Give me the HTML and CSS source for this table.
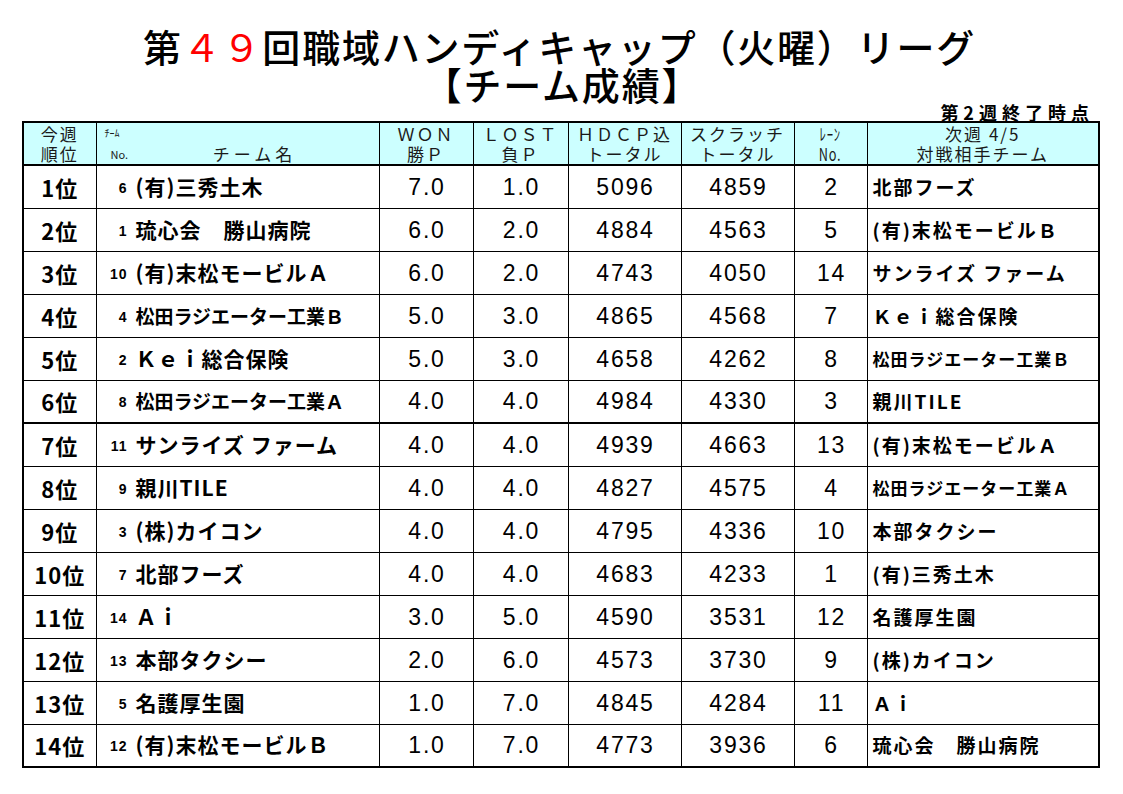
FILE: index.html
```html
<!DOCTYPE html>
<html lang="ja">
<head>
<meta charset="utf-8">
<title>第49回職域ハンディキャップ（火曜）リーグ</title>
<link rel="stylesheet" href="styles.css">
</head>
<body>
<div class="page">
  <header class="titles">
    <h1 class="title">第<span class="red">４９</span>回職域ハンディキャップ（火曜）リーグ</h1>
    <h2 class="subtitle">【チーム成績】</h2>
  </header>
  <div class="asof">第2週終了時点</div>
  <table class="standings">
    <colgroup>
      <col class="c-rank"><col class="c-team"><col class="c-won"><col class="c-lost">
      <col class="c-hdcp"><col class="c-scr"><col class="c-lane"><col class="c-next">
    </colgroup>
    <thead>
      <tr>
        <th class="h2l">今週<br>順位</th>
        <th class="h-team"><span class="tiny">ﾁｰﾑ</span><span class="tiny no">No.</span><span class="teamlabel">チーム名</span></th>
        <th class="h2l">ＷＯＮ<br>勝Ｐ</th>
        <th class="h2l">ＬＯＳＴ<br>負Ｐ</th>
        <th class="h2l">ＨＤＣＰ込<br>トータル</th>
        <th class="h2l">スクラッチ<br>トータル</th>
        <th class="h2l lane"><span class="cond">ﾚｰﾝ</span><br><span class="cond">No.</span></th>
        <th class="h2l">次週 4/5<br>対戦相手チーム</th>
      </tr>
    </thead>
    <tbody>
      <tr><td class="rank">1位</td><td class="team"><span class="num">6</span><span class="name">(有)三秀土木</span></td><td class="n">7.0</td><td class="n">1.0</td><td class="n">5096</td><td class="n">4859</td><td class="n">2</td><td class="next">北部フーズ</td></tr>
      <tr><td class="rank">2位</td><td class="team"><span class="num">1</span><span class="name">琉心会　勝山病院</span></td><td class="n">6.0</td><td class="n">2.0</td><td class="n">4884</td><td class="n">4563</td><td class="n">5</td><td class="next">(有)末松モービルＢ</td></tr>
      <tr><td class="rank">3位</td><td class="team"><span class="num">10</span><span class="name">(有)末松モービルＡ</span></td><td class="n">6.0</td><td class="n">2.0</td><td class="n">4743</td><td class="n">4050</td><td class="n">14</td><td class="next">サンライズ ファーム</td></tr>
      <tr><td class="rank">4位</td><td class="team"><span class="num">4</span><span class="name sm">松田ラジエーター工業Ｂ</span></td><td class="n">5.0</td><td class="n">3.0</td><td class="n">4865</td><td class="n">4568</td><td class="n">7</td><td class="next">Ｋｅｉ総合保険</td></tr>
      <tr><td class="rank">5位</td><td class="team"><span class="num">2</span><span class="name">Ｋｅｉ総合保険</span></td><td class="n">5.0</td><td class="n">3.0</td><td class="n">4658</td><td class="n">4262</td><td class="n">8</td><td class="next sm">松田ラジエーター工業Ｂ</td></tr>
      <tr class="thick"><td class="rank">6位</td><td class="team"><span class="num">8</span><span class="name sm">松田ラジエーター工業Ａ</span></td><td class="n">4.0</td><td class="n">4.0</td><td class="n">4984</td><td class="n">4330</td><td class="n">3</td><td class="next">親川TILE</td></tr>
      <tr><td class="rank">7位</td><td class="team"><span class="num">11</span><span class="name">サンライズ ファーム</span></td><td class="n">4.0</td><td class="n">4.0</td><td class="n">4939</td><td class="n">4663</td><td class="n">13</td><td class="next">(有)末松モービルＡ</td></tr>
      <tr><td class="rank">8位</td><td class="team"><span class="num">9</span><span class="name">親川TILE</span></td><td class="n">4.0</td><td class="n">4.0</td><td class="n">4827</td><td class="n">4575</td><td class="n">4</td><td class="next sm">松田ラジエーター工業Ａ</td></tr>
      <tr><td class="rank">9位</td><td class="team"><span class="num">3</span><span class="name">(株)カイコン</span></td><td class="n">4.0</td><td class="n">4.0</td><td class="n">4795</td><td class="n">4336</td><td class="n">10</td><td class="next">本部タクシー</td></tr>
      <tr><td class="rank">10位</td><td class="team"><span class="num">7</span><span class="name">北部フーズ</span></td><td class="n">4.0</td><td class="n">4.0</td><td class="n">4683</td><td class="n">4233</td><td class="n">1</td><td class="next">(有)三秀土木</td></tr>
      <tr><td class="rank">11位</td><td class="team"><span class="num">14</span><span class="name">Ａｉ</span></td><td class="n">3.0</td><td class="n">5.0</td><td class="n">4590</td><td class="n">3531</td><td class="n">12</td><td class="next">名護厚生園</td></tr>
      <tr><td class="rank">12位</td><td class="team"><span class="num">13</span><span class="name">本部タクシー</span></td><td class="n">2.0</td><td class="n">6.0</td><td class="n">4573</td><td class="n">3730</td><td class="n">9</td><td class="next">(株)カイコン</td></tr>
      <tr><td class="rank">13位</td><td class="team"><span class="num">5</span><span class="name">名護厚生園</span></td><td class="n">1.0</td><td class="n">7.0</td><td class="n">4845</td><td class="n">4284</td><td class="n">11</td><td class="next">Ａｉ</td></tr>
      <tr><td class="rank">14位</td><td class="team"><span class="num">12</span><span class="name">(有)末松モービルＢ</span></td><td class="n">1.0</td><td class="n">7.0</td><td class="n">4773</td><td class="n">3936</td><td class="n">6</td><td class="next">琉心会　勝山病院</td></tr>
    </tbody>
  </table>
</div>
</body>
</html>
```
FILE: styles.css
```css
* { box-sizing: border-box; }
html, body { margin: 0; padding: 0; background: #fff; }
body {
  font-family: "Noto Sans CJK JP", "Liberation Sans", sans-serif;
  color: #000;
}
.page {
  width: 1123px;
  padding: 27px 0 0 22px;
}
.titles {
  width: 1075px;
  text-align: center;
}
.title, .subtitle {
  margin: 0;
  font-size: 38px;
  line-height: 38px;
  font-weight: 500;
  letter-spacing: 1.8px;
}
.title { padding-left: 0; }
.subtitle { padding-left: 6px; }
.red { color: #ff0000; font-weight: 400; }
.asof {
  width: 1072px;
  text-align: right;
  font-size: 18px;
  line-height: 18px;
  font-weight: 700;
  letter-spacing: 5px;
  margin-top: 0;
}
.standings {
  border-collapse: collapse;
  table-layout: fixed;
  width: 1076px;
  border: 2px solid #000;
}
.c-rank { width: 73px; }
.c-team { width: 283px; }
.c-won { width: 94px; }
.c-lost { width: 95px; }
.c-hdcp { width: 113px; }
.c-scr { width: 113px; }
.c-lane { width: 73px; }
.c-next { width: 232px; }

.standings th, .standings td {
  border: 1px solid #000;
  padding: 0;
}
.standings thead tr { height: 43px; }
.standings thead th {
  background: #ccffff;
  font-weight: 400;
  font-size: 17px;
  line-height: 20px;
  color: #1a1a1a;
  letter-spacing: 2px;
  text-align: center;
  vertical-align: middle;
  border-bottom: 2px solid #000;
}
.h-team {
  position: relative;
}
.tiny {
  position: absolute;
  font-size: 10px;
  line-height: 10px;
  letter-spacing: 0;
  left: 8px;
  top: 5px;
}
.tiny.no { left: 14px; top: 26px; font-size: 11px; }
.teamlabel {
  display: block;
  padding: 20px 0 0 34px;
  letter-spacing: 4px;
}
.cond { display: inline-block; transform: scaleX(0.75); letter-spacing: 1px; }

.standings tbody tr { height: 43px; }
.standings tbody tr.thick td { border-bottom: 2px solid #000; }
.standings td {
  font-size: 21px;
  line-height: 24px;
  vertical-align: middle;
}
.rank {
  text-align: center;
  font-weight: 700;
  font-size: 22px !important;
  letter-spacing: 1px;
}
.team {
  white-space: nowrap;
}
.num {
  display: inline-block;
  width: 31px;
  text-align: right;
  font-family: "Liberation Sans", sans-serif;
  font-size: 14px;
  font-weight: 700;
  letter-spacing: 1px;
  vertical-align: 2px;
}
.name {
  margin-left: 8px;
  font-weight: 700;
  letter-spacing: 1px;
}
.name.sm { font-size: 19px; letter-spacing: 0; }
.n {
  text-align: center;
  font-family: "Liberation Sans", sans-serif;
  font-size: 23px !important;
  letter-spacing: 1.8px;
  padding-left: 2px !important;
}
.next {
  padding-left: 5px !important;
  font-weight: 700;
  font-size: 19px !important;
  letter-spacing: 2px;
  white-space: nowrap;
}
.next.sm { font-size: 17px !important; letter-spacing: 1px; }
```
